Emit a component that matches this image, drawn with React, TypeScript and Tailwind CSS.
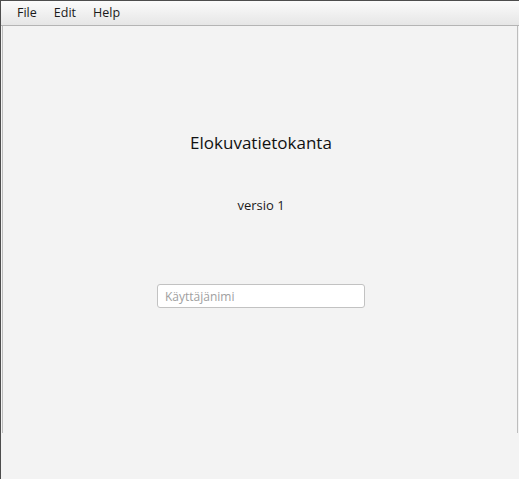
export default function App() {
  return (
    <div
      className="w-[519px] h-[479px] overflow-hidden bg-[#f3f3f3] border-l border-t border-[#4d4d4d] flex flex-col text-[#1a1a1a]"
      style={{ fontFamily: '"Open Sans", "Noto Sans", sans-serif' }}
    >
      <div className="h-[25px] shrink-0 flex items-center pl-[16px] gap-[17px] text-[12.5px] bg-gradient-to-b from-[#fbfbfb] to-[#e6e6e6] border-b border-[#b4b4b4]">
        <span>File</span>
        <span>Edit</span>
        <span>Help</span>
      </div>
      <div className="h-[407px] shrink-0 ml-[1px] mr-[1px] border-l border-r border-[#bdbdbd] flex flex-col items-center pt-[105px] pl-[2px]">
        <div className="text-[17px] leading-[24px] text-[#111]">Elokuvatietokanta</div>
        <div className="mt-[41px] text-[13px] leading-[18px]">versio 1</div>
        <input
          placeholder="Käyttäjänimi"
          className="mt-[70px] w-[208px] h-[24px] rounded-[3px] border border-[#c2c2c2] bg-white px-[7px] text-[12px] placeholder:text-[#a0a0a0] outline-none"
        />
      </div>
      <div className="flex-1" />
    </div>
  );
}
